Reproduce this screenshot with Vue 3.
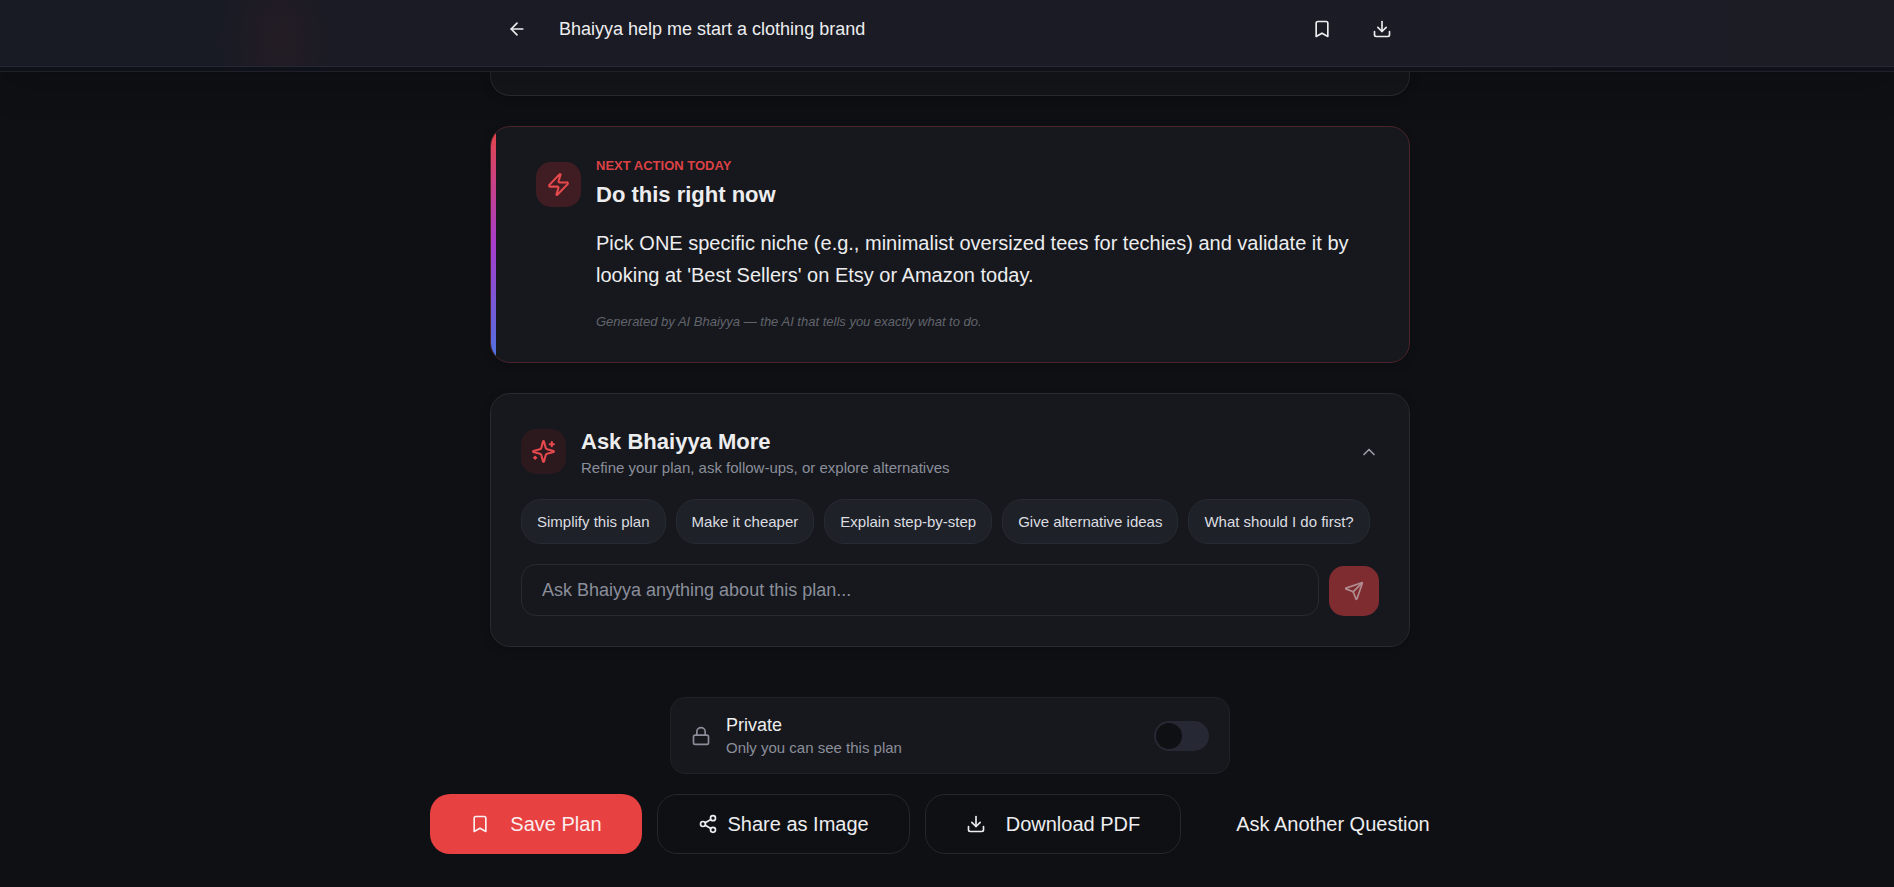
<script setup>
import { ref } from 'vue'

const question = ref('')
const isShared = ref(false)
const expanded = ref(true)
const suggestions = [
  'Simplify this plan',
  'Make it cheaper',
  'Explain step-by-step',
  'Give alternative ideas',
  'What should I do first?',
]
</script>

<template>
  <div class="page">
    <header class="topbar">
      <div class="topbar-band">
        <div class="topbar-inner">
          <button class="icon-btn" type="button" aria-label="Back">
            <svg class="icon" viewBox="0 0 24 24"><path d="m12 19-7-7 7-7" /><path d="M19 12H5" /></svg>
          </button>
          <h1 class="topbar-title">Bhaiyya help me start a clothing brand</h1>
          <div class="topbar-actions">
            <button class="icon-btn" type="button" aria-label="Save">
              <svg class="icon" viewBox="0 0 24 24"><path d="m19 21-7-4-7 4V5a2 2 0 0 1 2-2h10a2 2 0 0 1 2 2v16z" /></svg>
            </button>
            <button class="icon-btn" type="button" aria-label="Download">
              <svg class="icon" viewBox="0 0 24 24"><path d="M21 15v4a2 2 0 0 1-2 2H5a2 2 0 0 1-2-2v-4" /><path d="m7 10 5 5 5-5" /><path d="M12 15V3" /></svg>
            </button>
          </div>
        </div>
      </div>
    </header>

    <main class="content">
      <div class="column">
        <section class="card card-tail"></section>

        <section class="card action-card">
          <span class="tile tile-strong">
            <svg class="icon icon-lg" viewBox="0 0 24 24"><path d="M4 14a1 1 0 0 1-.78-1.63l9.9-10.2a.5.5 0 0 1 .86.46l-1.92 6.02A1 1 0 0 0 13 10h7a1 1 0 0 1 .78 1.63l-9.9 10.2a.5.5 0 0 1-.86-.46l1.92-6.02A1 1 0 0 0 11 14z" /></svg>
          </span>
          <div class="action-body">
            <p class="eyebrow">NEXT ACTION TODAY</p>
            <h2 class="heading">Do this right now</h2>
            <p class="action-text">Pick ONE specific niche (e.g., minimalist oversized tees for techies) and validate it by looking at 'Best Sellers' on Etsy or Amazon today.</p>
            <p class="credit">Generated by AI Bhaiyya — the AI that tells you exactly what to do.</p>
          </div>
        </section>

        <section class="card ask-card">
          <div class="ask-head">
            <span class="tile">
              <svg class="icon icon-lg" viewBox="0 0 24 24"><path d="M9.937 15.5A2 2 0 0 0 8.5 14.063l-6.135-1.582a.5.5 0 0 1 0-.962L8.5 9.936A2 2 0 0 0 9.937 8.5l1.582-6.135a.5.5 0 0 1 .963 0L14.063 8.5A2 2 0 0 0 15.5 9.937l6.135 1.581a.5.5 0 0 1 0 .964L15.5 14.063a2 2 0 0 0-1.437 1.437l-1.582 6.135a.5.5 0 0 1-.963 0z" /><path d="M20 3v4" /><path d="M22 5h-4" /><path d="M4 17v2" /><path d="M5 18H3" /></svg>
            </span>
            <div class="ask-titles">
              <h2 class="heading">Ask Bhaiyya More</h2>
              <p class="muted">Refine your plan, ask follow-ups, or explore alternatives</p>
            </div>
            <button class="collapse" type="button" aria-label="Collapse" :aria-expanded="expanded" @click="expanded = !expanded">
              <svg class="icon" viewBox="0 0 24 24"><path d="m18 15-6-6-6 6" /></svg>
            </button>
          </div>
          <template v-if="expanded">
            <div class="chips">
              <button v-for="s in suggestions" :key="s" class="chip" type="button" @click="question = s">{{ s }}</button>
            </div>
            <form class="ask-form" @submit.prevent>
              <input v-model="question" class="ask-input" type="text" aria-label="Ask Bhaiyya" placeholder="Ask Bhaiyya anything about this plan..." />
              <button class="send" type="submit" aria-label="Send">
                <svg class="icon" viewBox="0 0 24 24"><path d="M14.536 21.686a.5.5 0 0 0 .937-.024l6.5-19a.496.496 0 0 0-.635-.635l-19 6.5a.5.5 0 0 0-.024.937l7.93 3.18a2 2 0 0 1 1.112 1.11z" /><path d="m21.854 2.147-10.94 10.939" /></svg>
              </button>
            </form>
          </template>
        </section>
      </div>

      <section class="privacy">
        <svg class="icon lock" viewBox="0 0 24 24"><rect width="18" height="11" x="3" y="11" rx="2" /><path d="M7 11V7a5 5 0 0 1 10 0v4" /></svg>
        <label class="privacy-label" for="visibility">
          <span class="privacy-name">Private</span>
          <span class="muted">Only you can see this plan</span>
        </label>
        <input id="visibility" v-model="isShared" class="switch" type="checkbox" />
      </section>

      <div class="actions">
        <button class="btn btn-primary" type="button">
          <svg class="icon" viewBox="0 0 24 24"><path d="m19 21-7-4-7 4V5a2 2 0 0 1 2-2h10a2 2 0 0 1 2 2v16z" /></svg>
          Save Plan
        </button>
        <button class="btn btn-outline btn-compact" type="button">
          <svg class="icon" viewBox="0 0 24 24"><circle cx="18" cy="5" r="3" /><circle cx="6" cy="12" r="3" /><circle cx="18" cy="19" r="3" /><path d="m8.59 13.51 6.83 3.98" /><path d="m15.41 6.51-6.82 3.98" /></svg>
          Share as Image
        </button>
        <button class="btn btn-outline" type="button">
          <svg class="icon" viewBox="0 0 24 24"><path d="M21 15v4a2 2 0 0 1-2 2H5a2 2 0 0 1-2-2v-4" /><path d="m7 10 5 5 5-5" /><path d="M12 15V3" /></svg>
          Download PDF
        </button>
        <button class="btn" type="button">Ask Another Question</button>
      </div>
    </main>
  </div>
</template>

<style>
html,
body {
  background: #0e1014;
}
</style>

<style scoped>
.page {
  min-height: 100vh;
  box-sizing: border-box;
  background: #0e1014;
  color: #ededef;
  font-family: "Liberation Sans", Arial, sans-serif;
}

.page *,
.page *::before {
  box-sizing: border-box;
}

h1,
h2,
p {
  margin: 0;
}

button {
  padding: 0;
  border: 0;
  background: none;
  color: inherit;
  font-family: inherit;
  cursor: pointer;
}

.icon {
  display: block;
  flex: none;
  width: 20px;
  height: 20px;
  fill: none;
  stroke: currentColor;
  stroke-width: 2;
  stroke-linecap: round;
  stroke-linejoin: round;
}

.icon-lg {
  width: 25px;
  height: 25px;
}

/* Top bar */
.topbar {
  position: sticky;
  top: 0;
  z-index: 2;
  padding-bottom: 4px;
  border-bottom: 1px solid #202126;
  background: #10121a;
  box-shadow: 0 10px 40px rgba(0, 0, 0, 0.2);
}

.topbar-band {
  padding: 0 24px 0 30px;
  border-bottom: 1px solid #252733;
  background:
    radial-gradient(ellipse 60px 90px at 280px 40px, rgba(90, 30, 40, 0.16), rgba(90, 30, 40, 0)),
    linear-gradient(90deg, #181b24 0%, #1a1b24 25%, #1b1c24 100%);
}

.topbar-inner {
  display: flex;
  align-items: center;
  gap: 22px;
  max-width: 920px;
  height: 66px;
  margin: 0 auto;
  padding: 0 8px 8px 7px;
}

.icon-btn {
  display: grid;
  place-items: center;
  flex: none;
  width: 40px;
  height: 40px;
}

.topbar-title {
  flex: 1;
  font-size: 18px;
  font-weight: 400;
  line-height: 25px;
}

.topbar-actions {
  display: flex;
  gap: 20px;
}

/* Content */
.content {
  display: flex;
  flex-direction: column;
  align-items: center;
  padding: 0 24px 30px 30px;
}

.column {
  display: flex;
  flex-direction: column;
  gap: 30px;
  width: 100%;
  max-width: 920px;
}

.card {
  border: 1px solid #292a2f;
  border-radius: 20px;
  background: #16181d;
  box-shadow: 0 2px 10px rgba(0, 0, 0, 0.2);
}

.card-tail {
  height: 24px;
  border-top: 0;
  border-radius: 0 0 20px 20px;
  background: #15161a;
}

.action-card {
  position: relative;
  display: flex;
  align-items: flex-start;
  gap: 15px;
  overflow: hidden;
  padding: 30px 45px;
  border-color: #4a242a;
}

.action-card::before {
  content: "";
  position: absolute;
  top: 0;
  bottom: 0;
  left: 0;
  width: 5px;
  background: linear-gradient(180deg, #e84545, #a63dcc 50%, #4c74e0);
}

.tile {
  display: grid;
  place-items: center;
  flex: none;
  width: 45px;
  height: 45px;
  border-radius: 15px;
  background: #2b191e;
  color: #e5484d;
}

.tile-strong {
  margin-top: 5px;
  background: #401d22;
}

.action-body {
  flex: 1;
}

.eyebrow {
  color: #dc4145;
  font-size: 13px;
  font-weight: 700;
  line-height: 18px;
}

.heading {
  font-size: 22px;
  font-weight: 700;
  line-height: 30px;
}

.eyebrow + .heading {
  margin-top: 5px;
}

.action-text {
  margin-top: 17px;
  font-size: 20px;
  line-height: 32px;
}

.credit {
  margin-top: 20px;
  color: #62646c;
  font-size: 13px;
  font-style: italic;
  line-height: 21px;
}

.ask-card {
  padding: 30px;
}

.ask-head {
  display: flex;
  align-items: center;
  gap: 15px;
}

.ask-titles {
  flex: 1;
  padding-top: 3px;
}

.muted {
  color: #8b8e9a;
  font-size: 15px;
  line-height: 20px;
}

.ask-titles .muted {
  line-height: 22px;
}

.collapse {
  display: grid;
  place-items: center;
  width: 20px;
  height: 20px;
  color: #9a9ca6;
}

.chips {
  display: flex;
  flex-wrap: wrap;
  gap: 10px;
  margin-top: 20px;
}

.chip {
  height: 45px;
  padding: 0 15px;
  border: 1px solid #262a32;
  border-radius: 20px;
  background: #1e2128;
  color: #dcdde0;
  font-size: 15px;
}

.ask-form {
  display: flex;
  align-items: flex-end;
  gap: 10px;
  margin-top: 20px;
}

.ask-input {
  flex: 1;
  min-width: 0;
  height: 52px;
  padding: 0 20px;
  border: 1px solid #292a2f;
  border-radius: 15px;
  outline: 0;
  background: transparent;
  color: #ededef;
  font-family: inherit;
  font-size: 18px;
}

.ask-input::placeholder {
  color: #8b8e9a;
  opacity: 1;
}

.send {
  display: grid;
  place-items: center;
  flex: none;
  width: 50px;
  height: 50px;
  border-radius: 15px;
  background: #7f2c30;
  color: #b08d90;
}

/* Privacy */
.privacy {
  display: flex;
  align-items: center;
  gap: 15px;
  width: 100%;
  max-width: 560px;
  margin-top: 50px;
  padding: 15px 20px;
  border: 1px solid #202227;
  border-radius: 15px;
  background: #17181d;
}

.lock {
  color: #8b8e9a;
}

.privacy-label {
  display: flex;
  flex: 1;
  flex-direction: column;
}

.privacy-name {
  font-size: 18px;
  line-height: 25px;
}

.switch {
  flex: none;
  width: 55px;
  height: 30px;
  margin: 0;
  padding: 2px;
  border-radius: 15px;
  background: #262833;
  appearance: none;
  cursor: pointer;
}

.switch::before {
  content: "";
  display: block;
  width: 26px;
  height: 26px;
  border-radius: 13px;
  background: #0e1014;
}

.switch:checked::before {
  margin-left: auto;
}

/* Bottom actions */
.actions {
  display: flex;
  flex-wrap: wrap;
  justify-content: center;
  gap: 15px;
  margin-top: 20px;
}

.btn {
  display: flex;
  align-items: center;
  justify-content: center;
  gap: 20px;
  height: 60px;
  padding: 0 40px;
  border-radius: 20px;
  font-size: 20px;
}

.btn-primary {
  background: #e84142;
  color: #fbeeee;
}

.btn-outline {
  border: 1px solid #26272c;
}

.btn-compact {
  gap: 10px;
}
</style>
